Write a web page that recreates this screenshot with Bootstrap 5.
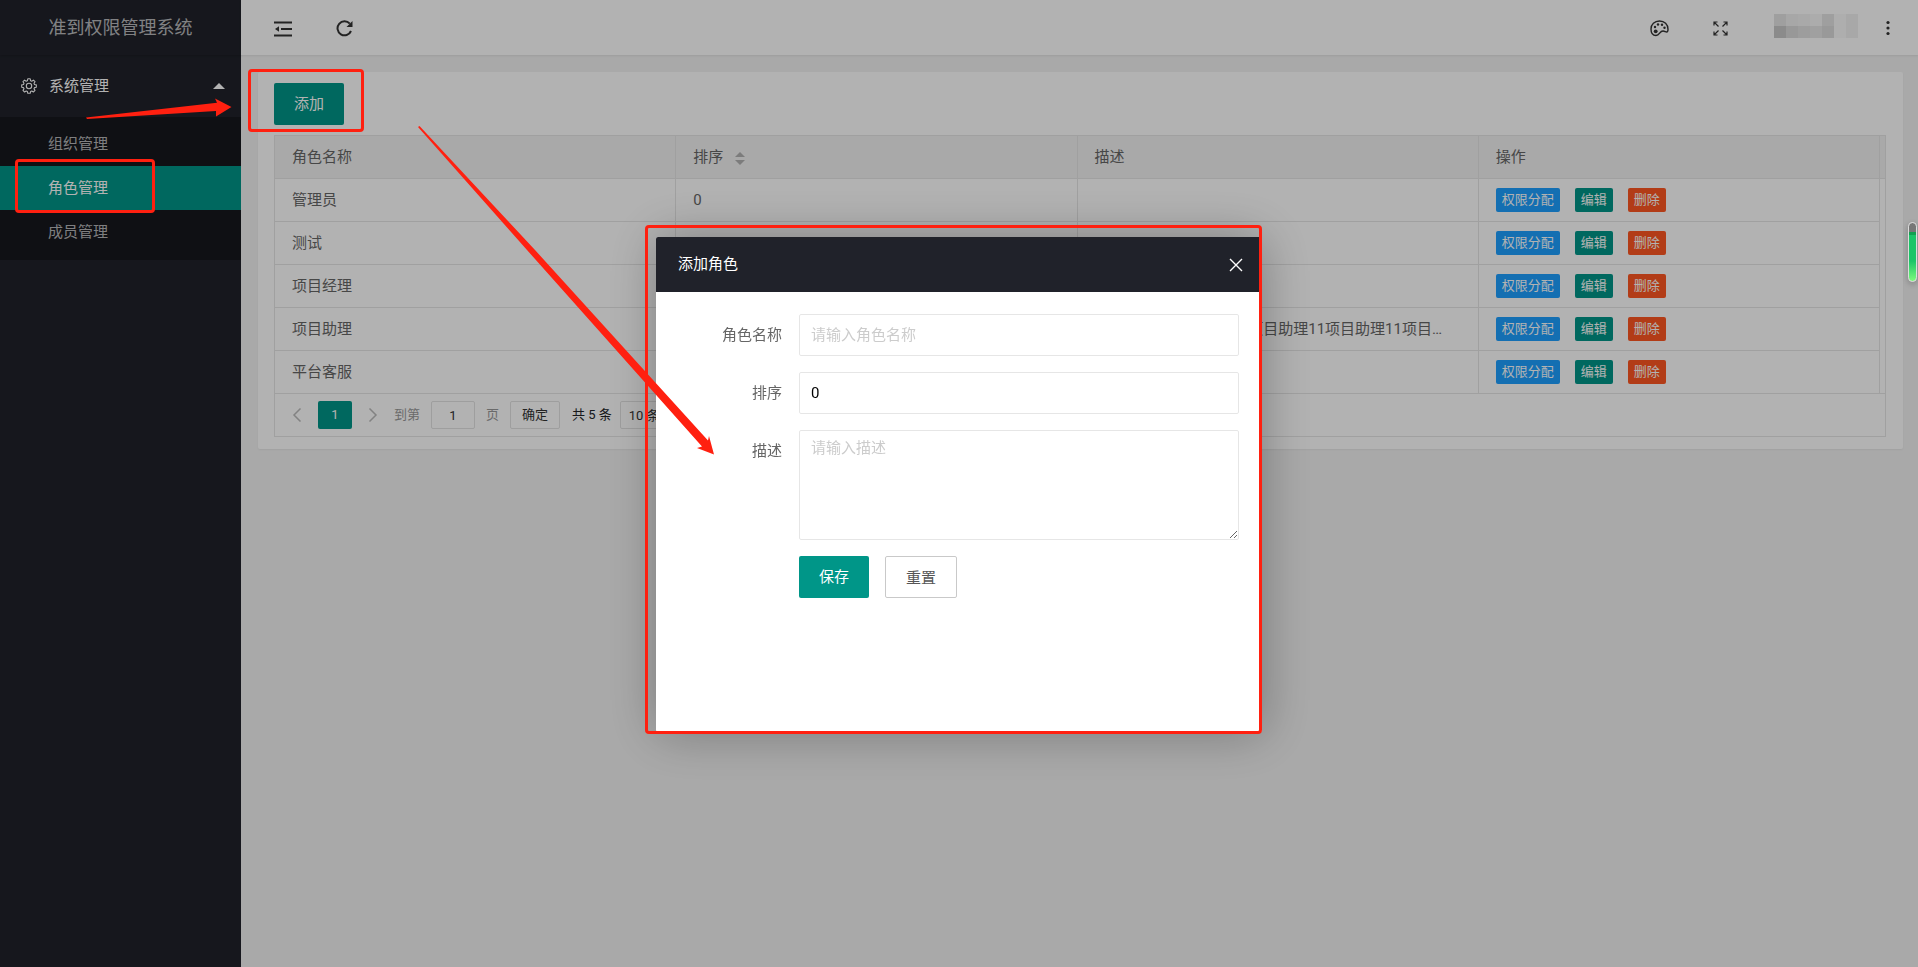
<!DOCTYPE html>
<html lang="zh-CN">
<head>
<meta charset="utf-8">
<meta name="viewport" content="width=device-width, initial-scale=1">
<title>准到权限管理系统</title>
<link href="https://cdn.jsdelivr.net/npm/bootstrap@5.3.0/dist/css/bootstrap.min.css" rel="stylesheet">
<style>
  :root { --teal: #009688; --line: #e6e6e6; --mark: #ff2010; }
  body, button, input, select, textarea { font-family: Roboto, "Noto Sans CJK SC", sans-serif; }
  body { font-size: 15px; line-height: 24px; color: #666; background: #f2f2f2; }
  a { text-decoration: none; color: inherit; }

  /* sidebar */
  .side { width: 241px; background: #20222a; color: rgba(255,255,255,.7); }
  .brand { height: 55px; font-size: 18px; box-shadow: 0 1px 2px rgba(0,0,0,.15); }
  .group-head { height: 62px; padding: 0 16px 0 21px; color: #fff; }
  .group-head svg { margin-right: 12px; }
  .caret-up { border: 6px solid transparent; border-top: 0; border-bottom-color: #fff; }
  .sub { background: rgba(0,0,0,.3); padding: 5px 0 6px; }
  .sub a { display: block; height: 44px; line-height: 44px; padding-left: 48px; }
  .sub .on { background: var(--teal); color: #fff; }

  /* top bar */
  .topbar { height: 55px; background: #fff; box-shadow: 0 1px 2px rgba(0,0,0,.08); padding: 0 28px 0 33px; color: #333; }
  .icon-btn { border: 0; background: none; padding: 0; line-height: 0; color: inherit; }
  .tools { gap: 44px; padding-top: 2px; }
  .user { display: grid; grid-template-columns: repeat(7, 12px); grid-auto-rows: 12px; }

  /* content */
  .panel { margin: 17px 15px 0 17px; padding: 11px 17px 12px 16px; background: #fff; border-radius: 2px; box-shadow: 0 1px 2px rgba(0,0,0,.05); }
  .main-btn { height: 42px; padding: 0 20px; border: 0; border-radius: 2px; background: var(--teal); color: #fff; font-size: 15px; line-height: 42px; }
  .plain-btn { background: #fff; color: #555; border: 1px solid #c9c9c9; }
  .toolbar-row { padding-bottom: 10px; }
  .grid { width: 100%; table-layout: fixed; border-collapse: separate; border-spacing: 0; border: 1px solid var(--line); border-width: 1px 0 0 1px; }
  .grid th, .grid td { height: 43px; padding: 0 20px 0 17px; font-weight: 400; border: 1px solid var(--line); border-width: 0 1px 1px 0; }
  .grid thead { background: #f2f2f2; }
  .grid .note { padding-right: 28px; }
  .grid .edge { width: 6px; padding: 0; }
  .grid tbody .edge { border-bottom: 0; }
  .grid tbody tr:last-child .edge { border-bottom: 1px solid var(--line); }
  .ops { gap: 15px; }
  .sorter { display: inline-flex; flex-direction: column; gap: 3px; margin-left: 12px; vertical-align: middle; }
  .sorter i { border: 5px solid transparent; }
  .sorter .up { border-top: 0; border-bottom-color: #b2b2b2; }
  .sorter .down { border-bottom: 0; border-top-color: #b2b2b2; }
  .act { height: 24px; padding: 0 6px; border: 0; border-radius: 2px; color: #fff; font-size: 13px; line-height: 22px; }
  .blue { background: #1e9fff; } .green { background: var(--teal); } .orange { background: #ff5722; }

  .pager { height: 43px; padding-left: 17px; border: 1px solid var(--line); border-top: 0; font-size: 13px; color: #999; }
  .pager .box { height: 28px; border: 1px solid #e2e2e2; border-radius: 2px; background: #fff; color: #333; font-size: 13px; line-height: 26px; }
  .pager .cur { width: 34px; background: var(--teal); color: #fff; border: 0; margin: 0 16px; }
  .pager .num { width: 44px; margin: 0 11px; text-align: center; }
  .pager .go { width: 50px; margin: 0 12px 0 11px; padding: 0; }

  /* dialog */
  .modal-backdrop.show { opacity: .3; }
  .dlg { max-width: 606px; margin: 0 auto; padding-top: 2px; min-height: 100%; }
  .dlg .modal-content { min-height: 495px; border: 0; border-radius: 2px; box-shadow: 1px 1px 50px rgba(0,0,0,.3); color: #666; }
  .dlg .modal-header { height: 55px; padding: 0 19px 0 22px; background: #20222a; color: #fff; border: 0; border-radius: 2px 2px 0 0; }
  .dlg .modal-title { font-size: 15px; font-weight: 400; }
  .dlg .modal-body { padding: 22px 23px; }
  .field { display: grid; grid-template-columns: 120px 1fr; margin-bottom: 16px; }
  .field label { padding: 9px 17px 0 0; text-align: right; }
  .field .form-control { height: 42px; padding: 0 11px; border: 1px solid var(--line); border-radius: 2px; font-size: 15px; color: #000; }
  .field textarea.form-control { height: 110px; padding: 5px 11px; line-height: 24px; resize: vertical; }
  .field .form-control::placeholder { color: #ccc; }
  .field-actions { grid-column: 2; }

  /* tutorial marks */
  .hl { position: absolute; z-index: 1060; border: 3px solid var(--mark); border-radius: 4px; pointer-events: none; }
  .hl-menu { left: 15px; top: -7px; width: 140px; height: 54px; }
  .hl-add { left: -26px; top: -14px; width: 116px; height: 63px; }
  .hl-dlg { inset: -12px 0 -2px -11px; }
  .arrow { position: absolute; z-index: 1060; fill: var(--mark); pointer-events: none; }
  .arrow-side { left: 86px; top: 43px; }
  .arrow-main { left: 144px; top: 97px; }

  .gauge { position: fixed; right: 1px; top: 222px; width: 9px; height: 60px; z-index: 1060; border: 1px solid #ddd; border-radius: 5px; background: linear-gradient(#777 0 9px, #12a050 9px 12px, #1cc568 12px 38px, #7dfa7d); box-shadow: 0 2px 6px rgba(0,0,0,.25); }
</style>
</head>
<body>
<div class="d-flex min-vh-100">

  <aside class="side flex-shrink-0">
    <div class="brand d-flex align-items-center justify-content-center">准到权限管理系统</div>
    <nav class="position-relative">
      <a href="#" class="group-head d-flex align-items-center">
        <svg width="16" height="16" viewBox="0 0 16 16" fill="none" stroke="currentColor" stroke-width="1.1" stroke-linejoin="round" aria-hidden="true">
          <path d="M6.8.8h2.4l.4 1.9 1.2.5 1.6-1.1 1.6 1.6-1 1.600.5 1.200 1.800.4v2.300l-1.800.4-.5 1.200 1 1.600-1.600 1.600-1.600-1-1.200.5-.4 1.800H6.800l-.4-1.800-1.200-.5-1.600 1-1.600-1.600 1-1.600-.5-1.200-1.800-.4V6.900l1.800-.4.5-1.200-1-1.600 1.600-1.600 1.600 1.100 1.200-.5z"/>
          <circle cx="8" cy="8" r="2.700"/>
        </svg>
        <span class="flex-grow-1">系统管理</span>
        <i class="caret-up"></i>
      </a>
      <div class="sub">
        <a href="#">组织管理</a>
        <div class="position-relative">
          <a href="#" class="on">角色管理</a>
          <span class="hl hl-menu"></span>
        </div>
        <a href="#">成员管理</a>
      </div>
      <svg class="arrow arrow-side" width="146" height="22" viewBox="0 0 146 22" aria-hidden="true"><path d="M0 19.500 131 4.800 129 .5 145.500 9 130 18.500V13L1 21z"/></svg>
    </nav>
  </aside>

  <main class="flex-grow-1 position-relative">
    <header class="topbar d-flex align-items-center justify-content-between">
      <div class="tools d-flex align-items-center">
        <button class="icon-btn" aria-label="收起菜单">
          <svg width="18" height="16" viewBox="0 0 18 16" fill="none" stroke="currentColor" stroke-width="2"><path d="M0 1.500h18M7 8h11M0 14.500h18"/><path d="M1 8l4-2.800v5.600z" fill="currentColor" stroke="none"/></svg>
        </button>
        <button class="icon-btn" aria-label="刷新">
          <svg width="17" height="17" viewBox="0 0 17 17" fill="none" stroke="currentColor" stroke-width="2"><path d="M15 11A7 7 0 1 1 13.800 3.700"/><path d="M16.500 1v6h-6z" fill="currentColor" stroke="none"/></svg>
        </button>
      </div>
      <div class="d-flex align-items-center">
        <div class="tools d-flex align-items-center">
          <button class="icon-btn" aria-label="主题">
            <svg width="19" height="17" viewBox="0 0 19 17" fill="none" stroke="currentColor" stroke-width="1.400"><path d="M9.500 1C4.500 1 1 4.500 1 9c0 4 2 6.500 5 6.500 3.800 0 3.500-4.500 7-4.500 1.800 0 2.500 1 3.700 1 1 0 1.300-1.200 1.300-2.700C18 4.500 14.500 1 9.500 1z"/><g fill="currentColor" stroke="none"><circle cx="5.700" cy="11.300" r="1.900"/><circle cx="5" cy="7" r="1.200"/><circle cx="8" cy="4.500" r="1.200"/><circle cx="12" cy="4.700" r="1.200"/><circle cx="14.500" cy="7.800" r="1.200"/></g></svg>
          </button>
          <button class="icon-btn" aria-label="全屏">
            <svg width="15" height="15" viewBox="0 0 15 15" fill="none" stroke="currentColor" stroke-width="1.200"><path d="M1 4.500V1h3.500M1 1l4.500 4.500M10.500 1H14v3.500M14 1 9.500 5.500M1 10.500V14h3.500M1 14l4.500-4.500M10.500 14H14v-3.500M14 14 9.500 9.500"/></svg>
          </button>
        </div>
        <div class="user mb-1" style="margin-left:46px" aria-hidden="true">
          <i style="background:#e4e4e4"></i><i style="background:#f0f0f0"></i><i style="background:#f3f3f3"></i><i style="background:#f7f7f7"></i><i style="background:#e4e4e4"></i><i style="background:#f9f9f9"></i><i style="background:#f1f1f1"></i>
          <i style="background:#c8c8c8"></i><i style="background:#dadada"></i><i style="background:#e1e1e1"></i><i style="background:#e6e6e6"></i><i style="background:#dcdcdc"></i><i style="background:#f9f9f9"></i><i style="background:#f1f1f1"></i>
        </div>
        <button class="icon-btn" style="margin-left:28px" aria-label="更多">
          <svg width="4" height="16" viewBox="0 0 4 16" fill="currentColor"><circle cx="2" cy="2.500" r="1.600"/><circle cx="2" cy="8" r="1.600"/><circle cx="2" cy="13.500" r="1.600"/></svg>
        </button>
      </div>
    </header>

    <section class="panel">
      <div class="toolbar-row d-flex">
        <div class="position-relative">
          <button class="main-btn">添加</button>
          <span class="hl hl-add"></span>
        </div>
      </div>

      <table class="grid">
        <thead>
          <tr><th>角色名称</th><th>排序<span class="sorter"><i class="up"></i><i class="down"></i></span></th><th>描述</th><th>操作</th><th class="edge"></th></tr>
        </thead>
        <tbody>
          <tr><td>管理员</td><td>0</td><td></td><td><div class="ops d-flex"><button class="act blue">权限分配</button><button class="act green">编辑</button><button class="act orange">删除</button></div></td><td class="edge"></td></tr>
          <tr><td>测试</td><td>0</td><td></td><td><div class="ops d-flex"><button class="act blue">权限分配</button><button class="act green">编辑</button><button class="act orange">删除</button></div></td><td class="edge"></td></tr>
          <tr><td>项目经理</td><td>0</td><td></td><td><div class="ops d-flex"><button class="act blue">权限分配</button><button class="act green">编辑</button><button class="act orange">删除</button></div></td><td class="edge"></td></tr>
          <tr><td>项目助理</td><td>0</td><td class="note text-truncate">项目助理11项目助理11项目助理11项目助理11项目助理11项目助理11</td><td><div class="ops d-flex"><button class="act blue">权限分配</button><button class="act green">编辑</button><button class="act orange">删除</button></div></td><td class="edge"></td></tr>
          <tr><td>平台客服</td><td>0</td><td></td><td><div class="ops d-flex"><button class="act blue">权限分配</button><button class="act green">编辑</button><button class="act orange">删除</button></div></td><td class="edge"></td></tr>
        </tbody>
      </table>

      <div class="pager d-flex align-items-center">
        <button class="icon-btn" aria-label="上一页"><svg width="10" height="14" viewBox="0 0 10 14" fill="none" stroke="#bbb" stroke-width="1.500"><path d="M8.500.5 2 7l6.500 6.500"/></svg></button>
        <button class="box cur">1</button>
        <button class="icon-btn" aria-label="下一页"><svg width="10" height="14" viewBox="0 0 10 14" fill="none" stroke="#bbb" stroke-width="1.500"><path d="M1.500.5 8 7l-6.500 6.500"/></svg></button>
        <label for="goto" class="ms-3">到第</label>
        <input id="goto" class="box num" type="text" value="1">
        <span>页</span>
        <button class="box go">确定</button>
        <span class="text-dark">共 5 条</span>
        <select class="box ms-2 ps-1" aria-label="每页条数"><option>10 条/页</option><option>20 条/页</option></select>
      </div>
    </section>

    <svg class="arrow arrow-main" width="340" height="420" viewBox="385 97 340 420" aria-hidden="true"><path d="M419.500 126 535 250 708 440.500 709 436 714 454.500 697 448 702 446.500 527 250 418 127z"/></svg>
  </main>
</div>

<div class="modal-backdrop show"></div>
<div class="modal d-block" tabindex="-1" role="dialog" aria-labelledby="dlgTitle">
  <div class="modal-dialog modal-dialog-centered dlg">
    <form class="modal-content">
      <div class="modal-header">
        <h1 class="modal-title" id="dlgTitle">添加角色</h1>
        <button type="button" class="icon-btn" aria-label="关闭"><svg width="14" height="14" viewBox="0 0 14 14" fill="none" stroke="#fff" stroke-width="1.400"><path d="M1 1l12 12M13 1 1 13"/></svg></button>
      </div>
      <div class="modal-body">
        <div class="field"><label for="roleName">角色名称</label><input id="roleName" class="form-control" type="text" placeholder="请输入角色名称"></div>
        <div class="field"><label for="roleSort">排序</label><input id="roleSort" class="form-control" type="text" value="0"></div>
        <div class="field"><label for="roleDesc">描述</label><textarea id="roleDesc" class="form-control" placeholder="请输入描述"></textarea></div>
        <div class="field"><div class="field-actions d-flex gap-3"><button type="button" class="main-btn">保存</button><button type="reset" class="main-btn plain-btn">重置</button></div></div>
      </div>
      <span class="hl hl-dlg"></span>
    </form>
  </div>
</div>
<div class="gauge"></div>
<script src="https://cdn.jsdelivr.net/npm/bootstrap@5.3.0/dist/js/bootstrap.bundle.min.js"></script>
</body>
</html>
